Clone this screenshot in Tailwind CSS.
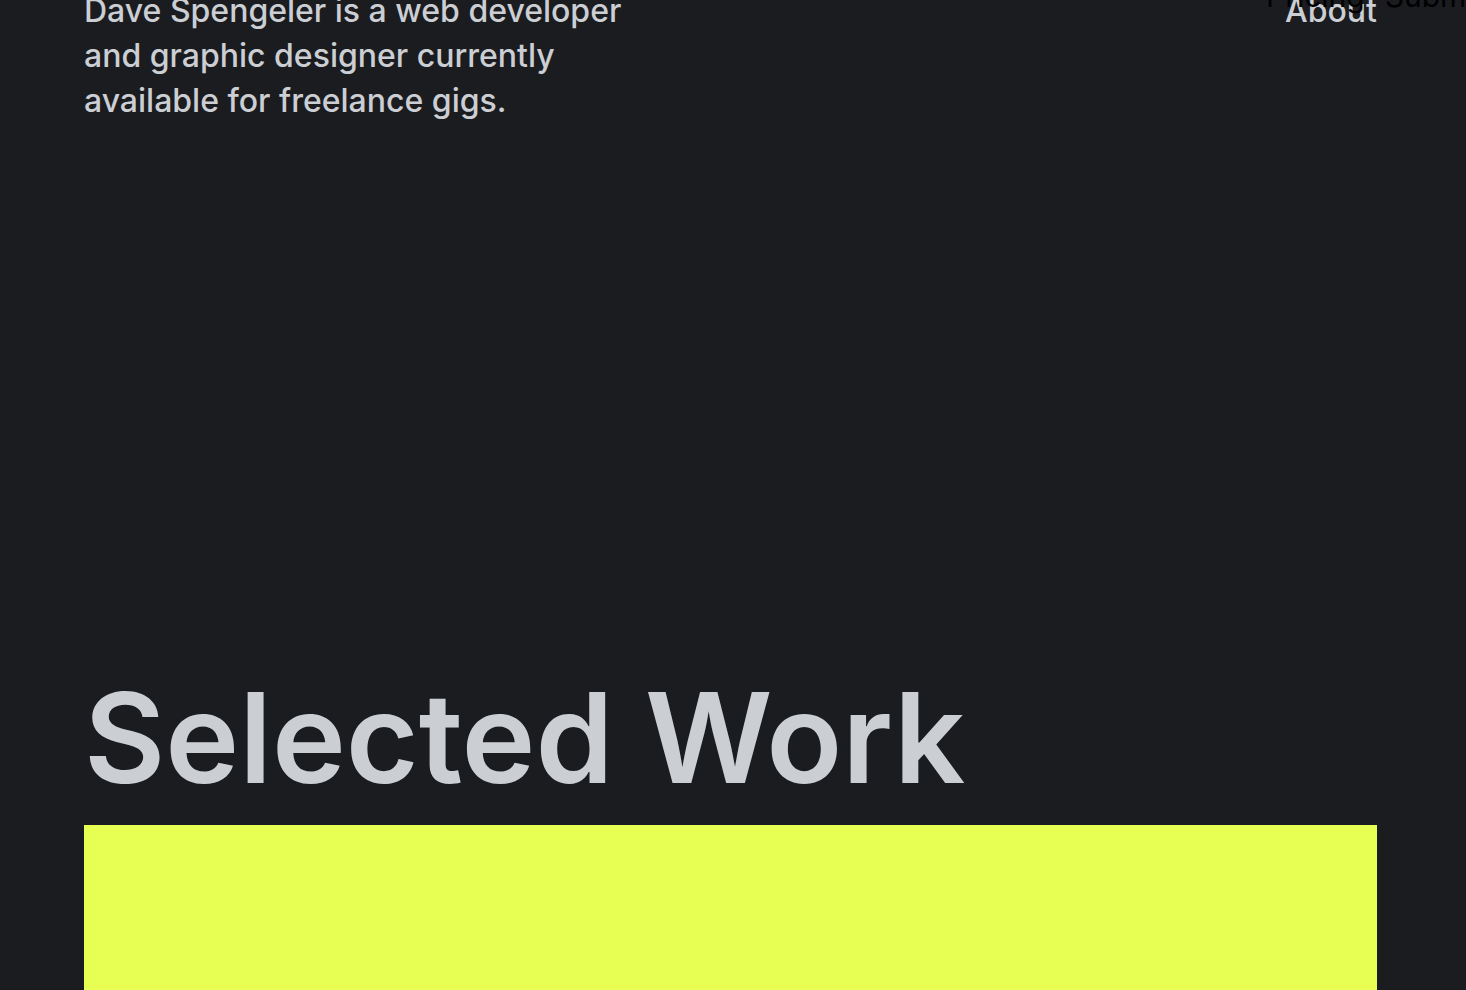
<!DOCTYPE html>
<html lang="en">
<head>
<meta charset="utf-8">
<meta name="viewport" content="width=device-width, initial-scale=1">
<title>Dave Spengeler</title>
<script src="https://cdn.jsdelivr.net/npm/@tailwindcss/browser@4"></script>
</head>
<body class="overflow-hidden bg-[#1b1c20] font-['Inter','Liberation_Sans',sans-serif] text-[#cbced3]">
<div class="relative flex h-screen flex-col overflow-hidden pr-[89px] pl-[84px]">
  <header class="-mt-3 flex items-start justify-between text-[32px] leading-[45px] font-medium">
    <p>Dave Spengeler is a web developer<br>and graphic designer currently<br>available for freelance gigs.</p>
    <a href="#about">About</a>
  </header>
  <nav class="absolute -top-6 left-full -ml-[200px] flex gap-5 text-[30px] leading-10 whitespace-nowrap text-black" aria-label="Site">
    <a href="#pricing">Pricing</a>
    <a href="#submit">Submit</a>
  </nav>
  <main class="mt-auto flex flex-col gap-3">
    <h1 class="text-[125px] leading-[150px] font-semibold whitespace-nowrap">Selected Work</h1>
    <section class="h-[165px] bg-[#e7ff52]" aria-label="Featured project"></section>
  </main>
</div>
</body>
</html>
